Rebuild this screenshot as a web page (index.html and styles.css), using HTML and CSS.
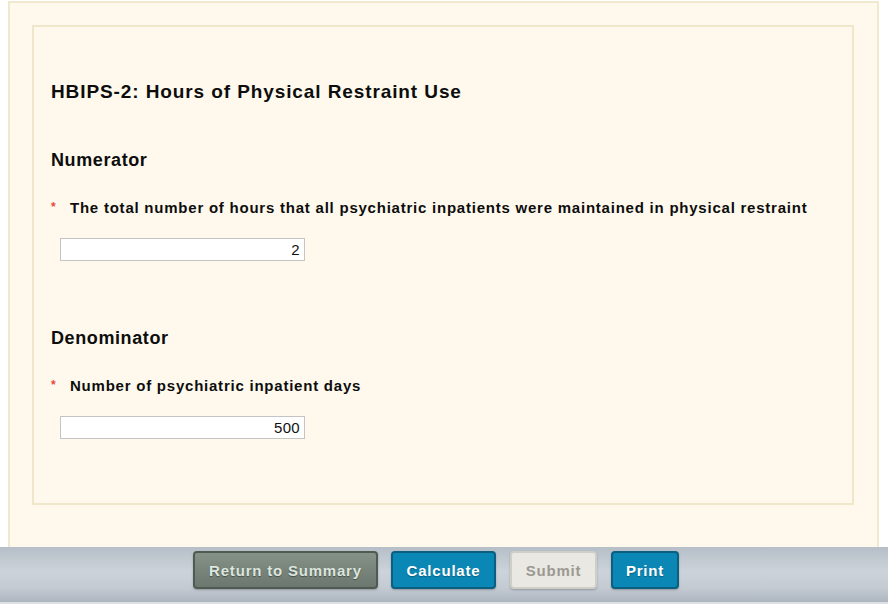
FILE: index.html
```html
<!DOCTYPE html>
<html lang="en">
<head>
    <meta charset="UTF-8">
    <meta name="viewport" content="width=device-width, initial-scale=1.0">
    <title>HBIPS-2: Hours of Physical Restraint Use</title>
    <link rel="stylesheet" href="styles.css">
</head>
<body>
    <div class="page">
        <div class="panel">
            <div class="measure">
                <h2 class="title">HBIPS-2: Hours of Physical Restraint Use</h2>

                <h3 class="section">Numerator</h3>
                <div class="field">
                    <label for="numerator"><span class="req">*</span>The total number of hours that all psychiatric inpatients were maintained in physical restraint</label>
                    <input type="text" id="numerator" value="2">
                </div>

                <h3 class="section section-gap">Denominator</h3>
                <div class="field">
                    <label for="denominator"><span class="req">*</span>Number of psychiatric inpatient days</label>
                    <input type="text" id="denominator" value="500">
                </div>
            </div>
        </div>
    </div>
    <div class="actions">
        <button type="button" class="btn btn-gray btn-return">Return to Summary</button>
        <button type="button" class="btn btn-blue btn-calc">Calculate</button>
        <button type="button" class="btn btn-disabled btn-submit">Submit</button>
        <button type="button" class="btn btn-blue btn-print">Print</button>
    </div>
</body>
</html>
```

FILE: styles.css
```css
body {
    font-family: "Liberation Sans", Arial, sans-serif;
    margin: 0;
    padding: 0;
    background-color: #fff;
    color: #0d0d0d;
}
.page {
    padding: 1px 9px 0 8px;
}
.panel {
    background-color: #fef9ec;
    border: 2px solid #f1e9cf;
    border-bottom: none;
    padding: 22px 23px 42px 22px;
}
.measure {
    border: 2px solid #f0e7ca;
    padding: 53px 17px 64px 17px;
}
.title {
    font-size: 19px;
    line-height: 23px;
    letter-spacing: 0.9px;
    margin: 0;
}
.section {
    font-size: 18px;
    line-height: 20px;
    letter-spacing: 0.6px;
    margin: 47px 0 0 0;
}
.section-gap {
    margin-top: 67px;
}
.field {
    margin-top: 29px;
}
.field label {
    display: block;
    font-size: 15px;
    line-height: 18px;
    letter-spacing: 0.77px;
    font-weight: bold;
}
.field .req {
    color: #e8483a;
    font-size: 12px;
    display: inline-block;
    width: 19px;
    letter-spacing: 0;
    vertical-align: top;
    line-height: 16px;
}
.field input {
    display: block;
    margin: 21px 0 0 9px;
    width: 245px;
    height: 23px;
    box-sizing: border-box;
    border: 1px solid #c4c4c4;
    background: #fff;
    font-family: "Liberation Sans", Arial, sans-serif;
    font-size: 15px;
    letter-spacing: 0.3px;
    text-align: right;
    padding: 0 4px;
    color: #111;
}
.actions {
    height: 51px;
    border-bottom: 2px solid #dde1e5;
    background: linear-gradient(#b6bfc8, #ccd3da 45%, #c3cad2 75%, #adb6bf);
    display: flex;
    justify-content: center;
    align-items: flex-start;
    gap: 13px;
    padding: 4px 16px 0 0;
    box-sizing: content-box;
}
.btn {
    height: 38px;
    padding: 0;
    font-family: "Liberation Sans", Arial, sans-serif;
    font-size: 15px;
    font-weight: bold;
    letter-spacing: 0.8px;
    border-radius: 4px;
    cursor: pointer;
    box-shadow: 0 1px 2px rgba(0, 0, 0, 0.25);
}
.btn-return {
    width: 185px;
}
.btn-calc {
    width: 105px;
}
.btn-submit {
    width: 87px;
    margin-left: 1px;
}
.btn-print {
    width: 68px;
    margin-left: 1px;
}
.btn-gray {
    background: linear-gradient(#859287, #6c776f);
    border: 2px solid #4f5a53;
    color: #dce6de;
    text-shadow: 0 1px 1px rgba(0, 0, 0, 0.4);
}
.btn-blue {
    background: #0a87b5;
    border: 2px solid #0b5f80;
    color: #fff;
    text-shadow: 0 1px 1px rgba(0, 0, 0, 0.3);
}
.btn-disabled {
    background: #e9e8e2;
    border: 2px solid #cfcec7;
    color: #9b9992;
    cursor: default;
}
```
